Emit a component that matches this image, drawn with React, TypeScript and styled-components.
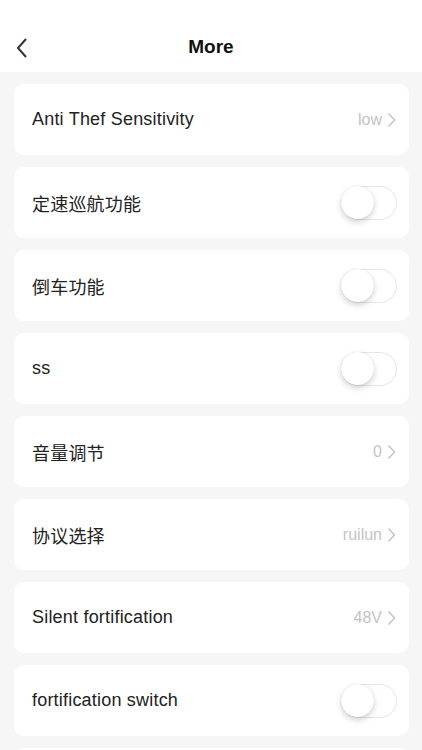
import styled, { createGlobalStyle } from "styled-components";

const GlobalStyle = createGlobalStyle`
  body {
    margin: 0;
    background: #f6f6f6;
    font-family: "Liberation Sans", "Noto Sans CJK SC", sans-serif;
  }
`;

const Page = styled.div`
  width: 422px;
  height: 750px;
  overflow: hidden;
  background: #f6f6f6;
`;

const Header = styled.div`
  height: 72px;
  background: #fff;
  display: flex;
  align-items: center;
  justify-content: center;
  position: relative;
  padding-top: 22px;
  box-sizing: border-box;
`;

const BackButton = styled.button`
  position: absolute;
  left: 12px;
  top: 37px;
  border: none;
  background: none;
  padding: 0;
  width: 20px;
  height: 22px;
`;

const Title = styled.h1`
  margin: 0;
  font-size: 19px;
  font-weight: 700;
  color: #111;
`;

const List = styled.div`
  display: flex;
  flex-direction: column;
  gap: 12px;
  padding: 12px 13px 0 14px;
`;

const Card = styled.div`
  height: 71px;
  background: #fff;
  border-radius: 10px;
  display: flex;
  align-items: center;
  justify-content: space-between;
  padding: 0 12px 0 18px;
  flex-shrink: 0;
`;

const Label = styled.span`
  font-size: 18px;
  letter-spacing: 0.2px;
  color: #222;
`;

const Value = styled.span`
  display: flex;
  align-items: center;
  gap: 5px;
  font-size: 16px;
  color: #c4c4c4;
  margin-right: 1px;
`;

const Switch = styled.div<{ $on?: boolean }>`
  width: 56px;
  height: 34px;
  border-radius: 17px;
  border: 1.5px solid #e6e6e6;
  box-sizing: border-box;
  background: ${(p) => (p.$on ? "#4cd964" : "#fff")};
  position: relative;
`;

const Knob = styled.div`
  position: absolute;
  left: -1px;
  top: -1px;
  width: 33px;
  height: 33px;
  border-radius: 50%;
  background: #fff;
  box-shadow: 0 3px 6px rgba(0, 0, 0, 0.18), 0 0 1px rgba(0, 0, 0, 0.15);
`;

const Chevron = () => (
  <svg width="9" height="16" viewBox="0 0 9 16">
    <path d="M1.5 1.5 L7.5 8 L1.5 14.5" fill="none" stroke="#c4c4c4" strokeWidth="1.5" />
  </svg>
);

type Row = { label: string; value?: string; toggle?: boolean };

const rows: Row[] = [
  { label: "Anti Thef Sensitivity", value: "low" },
  { label: "定速巡航功能", toggle: true },
  { label: "倒车功能", toggle: true },
  { label: "ss", toggle: true },
  { label: "音量调节", value: "0" },
  { label: "协议选择", value: "ruilun" },
  { label: "Silent fortification", value: "48V" },
  { label: "fortification switch", toggle: true },
  { label: "" },
];

export default function App() {
  return (
    <Page>
      <GlobalStyle />
      <Header>
        <BackButton>
          <svg width="14" height="22" viewBox="0 0 14 22">
            <path d="M11 2 L3 11 L11 20" fill="none" stroke="#333" strokeWidth="2" />
          </svg>
        </BackButton>
        <Title>More</Title>
      </Header>
      <List>
        {rows.map((r, i) => (
          <Card key={i}>
            <Label>{r.label}</Label>
            {r.toggle ? (
              <Switch>
                <Knob />
              </Switch>
            ) : r.value !== undefined ? (
              <Value>
                {r.value}
                <Chevron />
              </Value>
            ) : null}
          </Card>
        ))}
      </List>
    </Page>
  );
}
